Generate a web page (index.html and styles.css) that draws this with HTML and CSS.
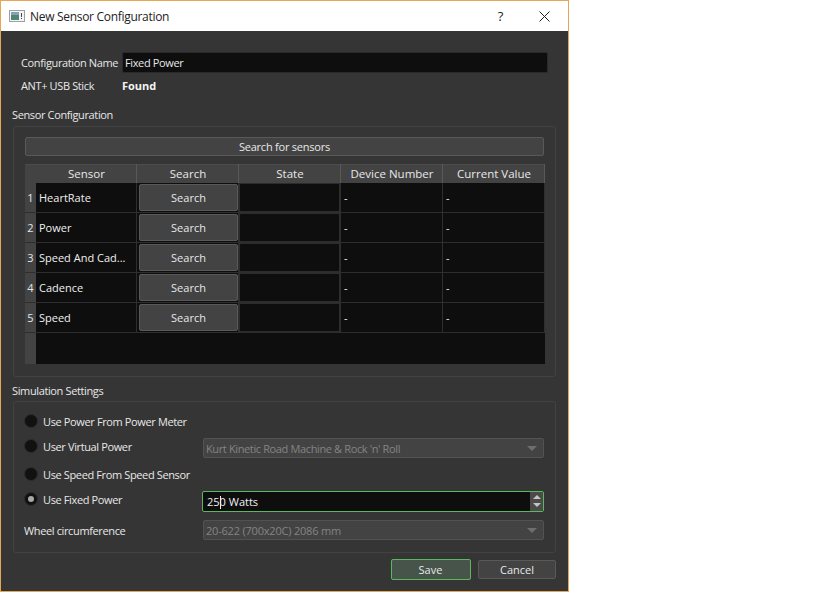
FILE: index.html
```html
<!DOCTYPE html>
<html lang="en">
<head>
    <meta charset="UTF-8">
    <title>New Sensor Configuration</title>
    <link rel="stylesheet" href="styles.css">
</head>
<body>
    <div class="window">
        <div class="titlebar">
            <svg class="app-icon" width="16" height="14" viewBox="0 0 16 14">
                <rect x="0.5" y="1.5" width="15" height="11" fill="#f4f4f4" stroke="#a0a0a0"/>
                <rect x="2" y="3" width="8" height="8" fill="#4f8478"/>
                <rect x="2" y="3" width="8" height="3" fill="#84a2b4"/>
                <rect x="12" y="4" width="1" height="4" fill="#444"/>
                <rect x="12" y="9" width="1" height="1" fill="#444"/>
            </svg>
            <span class="title">New Sensor Configuration</span>
            <span class="help">?</span>
            <svg class="close" width="11" height="11" viewBox="0 0 11 11">
                <path d="M0.5 0.5L10.5 10.5M10.5 0.5L0.5 10.5" stroke="#222" stroke-width="1" fill="none"/>
            </svg>
        </div>
        <div class="content">
            <div class="name-row">
                <label class="name-label">Configuration Name</label>
                <div class="field name-field">Fixed Power</div>
            </div>
            <div class="stick-row">
                <span class="name-label">ANT+ USB Stick</span>
                <b class="found">Found</b>
            </div>

            <div class="group-title sensor-title">Sensor Configuration</div>
            <div class="group sensor-group">
                <div class="btn search-all">Search for sensors</div>
                <table class="sensors">
                    <thead>
                        <tr>
                            <th class="corner"></th>
                            <th class="c-sensor">Sensor</th>
                            <th class="c-col">Search</th>
                            <th class="c-col">State</th>
                            <th class="c-col">Device Number</th>
                            <th class="c-col">Current Value</th>
                        </tr>
                    </thead>
                    <tbody>
                        <tr>
                            <th class="num">1</th><td>HeartRate</td>
                            <td class="cell-btn"><div class="btn">Search</div></td>
                            <td class="cell-state"><div class="state"></div></td><td>-</td><td>-</td>
                        </tr>
                        <tr>
                            <th class="num">2</th><td>Power</td>
                            <td class="cell-btn"><div class="btn">Search</div></td>
                            <td class="cell-state"><div class="state"></div></td><td>-</td><td>-</td>
                        </tr>
                        <tr>
                            <th class="num">3</th><td>Speed And Cad...</td>
                            <td class="cell-btn"><div class="btn">Search</div></td>
                            <td class="cell-state"><div class="state"></div></td><td>-</td><td>-</td>
                        </tr>
                        <tr>
                            <th class="num">4</th><td>Cadence</td>
                            <td class="cell-btn"><div class="btn">Search</div></td>
                            <td class="cell-state"><div class="state"></div></td><td>-</td><td>-</td>
                        </tr>
                        <tr>
                            <th class="num">5</th><td>Speed</td>
                            <td class="cell-btn"><div class="btn">Search</div></td>
                            <td class="cell-state"><div class="state"></div></td><td>-</td><td>-</td>
                        </tr>
                        <tr class="filler">
                            <th class="num"></th><td colspan="5"></td>
                        </tr>
                    </tbody>
                </table>
            </div>

            <div class="group-title sim-title">Simulation Settings</div>
            <div class="group sim-group">
                <div class="sim-row row-meter">
                    <span class="radio"></span><span class="radio-label">Use Power From Power Meter</span>
                </div>
                <div class="sim-row row-virtual">
                    <span class="radio"></span><span class="radio-label">User Virtual Power</span>
                    <div class="combo">Kurt Kinetic Road Machine &amp; Rock 'n' Roll<span class="arrow"></span></div>
                </div>
                <div class="sim-row row-speed">
                    <span class="radio"></span><span class="radio-label">Use Speed From Speed Sensor</span>
                </div>
                <div class="sim-row row-fixed">
                    <span class="radio on"></span><span class="radio-label">Use Fixed Power</span>
                    <div class="spin">
                        <span class="spin-text">25<i class="caret"></i>0 Watts</span>
                        <span class="spin-btns"><span class="up"></span><span class="down"></span></span>
                    </div>
                </div>
                <div class="sim-row row-wheel">
                    <span class="wheel-label">Wheel circumference</span>
                    <div class="combo wheel-combo">20-622 (700x20C) 2086 mm<span class="arrow"></span></div>
                </div>
            </div>

            <div class="actions">
                <div class="btn save">Save</div>
                <div class="btn cancel">Cancel</div>
            </div>
        </div>
    </div>
</body>
</html>
```

FILE: styles.css
```css
/* page and dialog frame */
html, body {
    margin: 0;
    padding: 0;
    height: 100%;
    background: white;
}
body {
    font-family: "Open Sans", "Noto Sans", sans-serif;
    font-size: 11px;
    letter-spacing: -0.37px;
    color: #e8e8e8;
    overflow: hidden;
}
.window {
    box-sizing: border-box;
    width: 569px;
    height: 592px;
    border: 1px solid #e5a850;
    display: flex;
    flex-direction: column;
}
.titlebar {
    height: 30px;
    flex: none;
    background: white;
    display: flex;
    align-items: center;
    color: #222;
}
.app-icon {
    margin-left: 8px;
}
.title {
    margin-left: 5px;
    font-size: 12px;
    letter-spacing: -0.3px;
    flex: 1;
}
.help {
    font-size: 13px;
    margin-right: 36px;
}
.close {
    margin-right: 18px;
}
.content {
    flex: 1;
    background: #353535;
    padding: 0 12px 0 12px;
    position: relative;
}

/* top rows */
.name-row {
    display: flex;
    align-items: center;
    margin: 21px 8px 0 8px;
    height: 21px;
}
.name-label {
    width: 101px;
    flex: none;
}
.field {
    background: #0e0e0e;
    border: 1px solid #2a2a2a;
    border-radius: 2px;
    box-sizing: border-box;
    height: 21px;
    line-height: 19px;
    padding-left: 2px;
}
.name-field {
    width: 426px;
}
.stick-row {
    display: flex;
    align-items: center;
    margin: 2px 8px 0 8px;
    height: 21px;
}
.found {
    font-weight: 700;
    letter-spacing: 0;
    color: #f4f4f4;
}

/* group boxes */
.group-title {
    height: 16px;
    line-height: 16px;
    margin-left: -1px;
}
.sensor-title {
    margin-top: 11px;
}
.sim-title {
    margin-top: 6px;
}
.group {
    box-sizing: border-box;
    width: 543px;
    border: 1px solid #424242;
    border-radius: 3px;
}
.sensor-group {
    height: 251px;
    margin-top: 3px;
    padding: 10px 11px 0 11px;
}
.sim-group {
    height: 152px;
    margin-top: 2px;
    padding: 0 11px 0 10px;
}

/* buttons */
.btn {
    box-sizing: border-box;
    background: #434343;
    border: 1px solid #595959;
    border-radius: 2px;
    text-align: center;
    letter-spacing: 0;
    color: #e8e8e8;
}
.search-all {
    height: 19px;
    line-height: 17px;
    width: 519px;
    letter-spacing: -0.22px;
}

/* sensor table */
.sensors {
    margin-top: 8px;
    width: 520px;
    height: 200px;
    table-layout: fixed;
    border-collapse: collapse;
    font-size: 11px;
    letter-spacing: 0;
}
.sensors thead th {
    height: 16px;
    padding: 0 0 2px 0;
    font-size: 11.5px;
    font-weight: 400;
    text-indent: 1px;
    background: #434343;
    border-right: 1px solid #595959;
    border-top: 1px solid #4c4c4c;
    color: #e8e8e8;
}
.sensors .corner {
    width: 11px;
    border-right: none;
}
.sensors .c-sensor {
    width: 100px;
}
.sensors .c-col {
    width: 101px;
}
.sensors td {
    background: #0e0e0e;
    height: 29px;
    padding: 0 0 0 3px;
    border-right: 1px solid #2e2e2e;
    border-bottom: 1px solid #2e2e2e;
    color: #f0f0f0;
    white-space: nowrap;
    overflow: hidden;
}
.sensors .num {
    background: #434343;
    padding: 0;
    font-weight: 400;
    border-bottom: 1px solid #2e2e2e;
    color: #e8e8e8;
}
.sensors .cell-btn {
    padding: 0 0 0 2px;
}
.sensors .cell-btn .btn {
    height: 27px;
    line-height: 25px;
}
.sensors .cell-state {
    padding: 0;
    background: #2c2c2c;
}
.state {
    height: 27px;
    margin: 0 1px;
    background: #0e0e0e;
    border-radius: 1px;
}
.sensors .filler td {
    height: auto;
    border-right: none;
    border-bottom: none;
}
.sensors .filler .num {
    border-bottom: none;
}

/* simulation rows */
.sim-row {
    display: flex;
    align-items: center;
    position: relative;
}
.radio {
    flex: none;
    width: 14px;
    height: 14px;
    border-radius: 50%;
    background: #111;
    border: 1px solid #2c2c2c;
    box-sizing: border-box;
    margin-right: 5px;
    display: flex;
    align-items: center;
    justify-content: center;
}
.radio.on::after {
    content: "";
    width: 6px;
    height: 6px;
    border-radius: 50%;
    background: #a8a8a8;
}
.row-meter {
    margin-top: 11px;
    height: 16px;
}
.row-virtual {
    margin-top: 8px;
    height: 22px;
}
.row-virtual .radio-label,
.row-virtual .radio {
    position: relative;
    top: -2px;
}
.row-speed {
    margin-top: 7px;
    height: 16px;
}
.row-fixed {
    margin-top: 8px;
    height: 22px;
}
.row-fixed .radio-label,
.row-fixed .radio {
    position: relative;
    top: -2px;
}
.row-wheel {
    margin-top: 7px;
    height: 22px;
}
.radio-label {
    width: 160px;
    flex: none;
}
.wheel-label {
    width: 179px;
    flex: none;
}
.combo {
    box-sizing: border-box;
    width: 341px;
    height: 20px;
    line-height: 20px;
    background: #434343;
    border: 1px solid #525252;
    border-radius: 2px;
    padding-left: 2px;
    color: #838383;
    margin-left: 0;
    position: relative;
}
.wheel-combo {
    letter-spacing: -0.2px;
}
.arrow {
    position: absolute;
    right: 6px;
    top: 7px;
    border-left: 5px solid transparent;
    border-right: 5px solid transparent;
    border-top: 5px solid #6e6e6e;
}
.spin {
    box-sizing: border-box;
    width: 343px;
    height: 21px;
    margin-left: -1px;
    background: #0e0e0e;
    border: 1px solid #5cb85c;
    border-radius: 2px;
    display: flex;
    align-items: center;
    justify-content: space-between;
    letter-spacing: 0;
    color: #f0f0f0;
}
.spin-text {
    padding-left: 4px;
}
.caret {
    display: inline-block;
    width: 1px;
    height: 13px;
    margin: 0 -1px 0 0;
    background: #f0f0f0;
    vertical-align: -3px;
}
.spin-btns {
    flex: none;
    width: 13px;
    height: 19px;
    background: #4a4a4a;
    display: flex;
    flex-direction: column;
    align-items: center;
    justify-content: center;
    gap: 4px;
}
.up {
    border-left: 4px solid transparent;
    border-right: 4px solid transparent;
    border-bottom: 4px solid #c4c4c4;
}
.down {
    border-left: 4px solid transparent;
    border-right: 4px solid transparent;
    border-top: 4px solid #c4c4c4;
}

/* dialog buttons */
.actions {
    display: flex;
    justify-content: flex-end;
    align-items: center;
    gap: 7px;
    width: 543px;
    margin-top: 6px;
}
.save {
    width: 80px;
    height: 21px;
    line-height: 19px;
    padding-right: 1px;
    background: #46544a;
    border-color: #5cb85c;
}
.cancel {
    width: 78px;
    height: 19px;
    line-height: 17px;
}
```
